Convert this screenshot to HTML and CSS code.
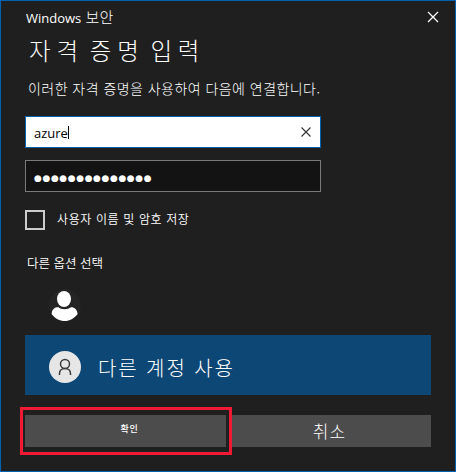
FILE: index.html
```html
<!DOCTYPE html>
<html lang="ko">
<head>
<meta charset="utf-8">
<title>Windows 보안</title>
<link rel="stylesheet" href="styles.css">
</head>
<body>
<main class="dialog">
  <header class="titlebar">
    <span class="caption"><span class="brand">Windows</span> 보안</span>
    <svg class="close" width="12" height="12" viewBox="0 0 12 12"><path d="M1 1L11 11M11 1L1 11"/></svg>
  </header>
  <h1 class="heading">자격 증명 입력</h1>
  <p class="message">이러한 자격 증명을 사용하여 다음에 연결합니다.</p>
  <div class="field field-user">
    <span class="value">azure</span><span class="caret"></span>
    <svg class="clear" width="10" height="10" viewBox="0 0 10 10"><path d="M.5 .5L9.5 9.5M9.5 .5L.5 9.5"/></svg>
  </div>
  <div class="field field-password"><span class="dots">●●●●●●●●●●●●●●</span></div>
  <label class="remember"><span class="checkbox"></span><span class="remember-text">사용자 이름 및 암호 저장</span></label>
  <h2 class="options-title">다른 옵션 선택</h2>
  <div class="account">
    <svg class="avatar" width="32" height="32" viewBox="0 0 32 32"><circle cx="16" cy="16" r="16" fill="#242424"/><ellipse cx="15" cy="10" rx="7" ry="8" fill="#fff"/><path d="M2.6 25C3 20 6 18.2 9.3 18.3C12 20.8 19 20.8 22 18.3C25.5 18.2 28.3 20.5 28.6 25C25 29.8 20.5 32 16 32C10.500 32 6 29.500 2.600 25Z" fill="#fff"/></svg>
  </div>
  <div class="account selected">
    <svg class="avatar" width="32" height="32" viewBox="0 0 32 32"><circle cx="16" cy="16" r="16" fill="#e6e6e6"/><g fill="none" stroke="#3c3c3c" stroke-width="1.500"><circle cx="16" cy="13" r="4.500"/><path d="M10.500 24V22.500C10.500 19.500 12.800 17.500 16 17.500S21.500 19.500 21.500 22.500V24"/></g></svg>
    <span class="account-name">다른 계정 사용</span>
  </div>
  <footer class="actions">
    <div class="button ok"><span class="ok-text">확인</span><span class="highlight"></span></div>
    <div class="button cancel"><span class="cancel-text">취소</span></div>
  </footer>
</main>
</body>
</html>
```
FILE: styles.css
```css
* { box-sizing: border-box; }
body { margin: 0; }
.dialog {
  width: 456px;
  height: 472px;
  padding: 0 24px;
  border: 1px solid #0063b1;
  background: #1f1f1f;
  color: #fff;
  font-family: "Noto Sans CJK KR", sans-serif;
  font-weight: 300;
  white-space: nowrap;
  overflow: hidden;
}
.titlebar { display: flex; height: 32px; padding-top: 6px; }
.caption { font-size: 15px; line-height: 20px; letter-spacing: .1px; padding-left: 1px; }
.brand { font-family: "Open Sans", sans-serif; font-size: 13px; font-weight: 400; letter-spacing: 0; }
.close { margin: 4px -8px 0 auto; stroke: #fff; stroke-width: 1.3; }
.heading {
  margin: 0;
  height: 40px;
  padding-left: 4px;
  font-size: 23.5px;
  font-weight: 300;
  line-height: 35px;
  letter-spacing: 5.8px;
  word-spacing: -6.5px;
}
.message { margin: 5px 0 0; height: 38px; padding-left: 3px; font-size: 14px; line-height: 20px; letter-spacing: .45px; }
.field { display: flex; align-items: center; width: 296px; height: 32px; padding-left: 8px; }
.field-user { border: 1px solid #0063b1; background: #fff; color: #000; }
.value { padding-top: 1px; font: 400 13px/20px "Open Sans", sans-serif; letter-spacing: 0; }
.caret { width: 1px; height: 13px; background: #000; }
.clear { margin: 0 9px 0 auto; stroke: #333; stroke-width: 1.1; }
.field-password { margin-top: 12px; border: 1px solid #7a7a7a; background: #131313; }
.dots { padding-top: 3px; font: 9px/12px "DejaVu Sans", sans-serif; letter-spacing: .59px; }
.remember { display: flex; align-items: center; height: 20px; margin-top: 18px; }
.checkbox { width: 20px; height: 20px; border: 2px solid #ccc; }
.remember-text { margin: -3px 0 0 12px; font-size: 12px; font-weight: 350; line-height: 20px; letter-spacing: .62px; }
.options-title { margin: 23px 0 0; height: 26px; padding-left: 2px; font-size: 12.5px; font-weight: 350; line-height: 20px; }
.account { display: flex; align-items: center; width: 406px; height: 56px; padding: 0 0 4px 24px; }
.selected { height: 60px; padding-bottom: 0; background: #0d4775; }
.selected .avatar { margin-top: 4px; }
.account-name { margin-left: 17px; padding-top: 6px; font-size: 20px; line-height: 30px; letter-spacing: 1.9px; }
.actions { display: flex; justify-content: space-between; width: 406px; margin-top: 20px; }
.button { position: relative; display: flex; align-items: center; justify-content: center; width: 201px; height: 32px; background: #4c4c4c; }
.ok-text { padding: 0 0 5px 8px; font-size: 9px; font-weight: 500; line-height: 14px; letter-spacing: .8px; }
.cancel-text { padding: 0 2px 1px 0; font-size: 17px; line-height: 24px; letter-spacing: 1px; }
.highlight { position: absolute; z-index: 1; left: -5px; top: -8px; width: 212px; height: 48px; border: 3px solid #f01a35; }
```
